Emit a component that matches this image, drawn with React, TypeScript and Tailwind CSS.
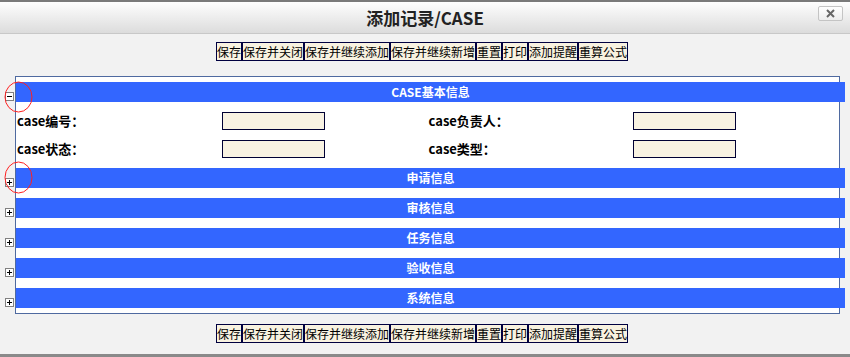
import React from "react";

const font = { fontFamily: '"Noto Sans CJK SC", "Noto Sans", sans-serif' };

const buttons = ["保存", "保存并关闭", "保存并继续添加", "保存并继续新增", "重置", "打印", "添加提醒", "重算公式"];

const ButtonBar = () => (
	<div className="flex justify-center">
		<div className="mr-[6px] flex">
			{buttons.map((b) => (
				<button
					key={b}
					className="h-[19px] border border-[#000040] bg-[#f8f2e0] px-0 text-[12px] leading-[17px] text-black"
				>
					{b}
				</button>
			))}
		</div>
	</div>
);

const Toggle = ({ open }: { open?: boolean }) => (
	<span className="absolute left-[-11px] top-[10px] flex h-[9px] w-[9px] items-center justify-center border border-[#808080] bg-white">
		<svg width="7" height="7" viewBox="0 0 7 7">
			<rect x="1" y="3" width="5" height="1" fill="#000" />
			{!open && <rect x="3" y="1" width="1" height="5" fill="#000" />}
		</svg>
	</span>
);

const Bar = ({ title, open }: { title: string; open?: boolean }) => (
	<div className="relative h-[20px] w-[calc(100%+6px)] bg-[#3366ff]">
		<Toggle open={open} />
		<div className="flex h-full items-center justify-center text-[12px] font-bold text-white">{title}</div>
	</div>
);

const Field = ({ label }: { label: string }) => (
	<>
		<div className="flex items-center pl-[1px] text-[13px] font-bold text-black">{label}</div>
		<div className="flex items-center">
			<input className="h-[18px] w-[103px] border border-[#000033] bg-[#f8f2e2] outline-none" />
		</div>
	</>
);

export default function App() {
	return (
		<div className="relative h-[357px] w-[850px] overflow-hidden border-b-[3px] border-[#8a8a8a] bg-[#f2f2f2]" style={font}>
			{/* title */}
			<div className="relative flex h-[34px] items-center justify-center border-t-2 border-b border-t-[#7a7a7a] border-b-[#c8c8c8] bg-gradient-to-b from-[#fefefe] to-[#dcdcdc]">
				<span className="text-[17px] font-bold text-[#222]">添加记录/CASE</span>
				<button className="absolute right-[7px] top-[4px] flex h-[15px] w-[25px] items-center justify-center rounded-[2px] border border-[#c4c4c4] bg-gradient-to-b from-white to-[#ececec]">
					<svg width="9" height="9" viewBox="0 0 9 9">
						<path d="M1 1L8 8M8 1L1 8" stroke="#666" strokeWidth="2" />
					</svg>
				</button>
			</div>

			<div className="pt-[8px]">
				<ButtonBar />

				<div className="ml-[15px] mr-[10px] mt-[15px] border border-[#4f6aa0] bg-white py-[5px]">
					<Bar title="CASE基本信息" open />
					<div className="grid h-[66px] grid-cols-4 grid-rows-2 gap-y-[10px] py-[10px]">
						<Field label="case编号：" />
						<Field label="case负责人：" />
						<Field label="case状态：" />
						<Field label="case类型：" />
					</div>
					<div className="flex flex-col gap-[10px]">
						<Bar title="申请信息" />
						<Bar title="审核信息" />
						<Bar title="任务信息" />
						<Bar title="验收信息" />
						<Bar title="系统信息" />
					</div>
				</div>

				<div className="mt-[10px]">
					<ButtonBar />
				</div>
			</div>

			{/* annotation circles */}
			<svg className="pointer-events-none absolute left-0 top-0" width="850" height="357">
				<ellipse cx="18.5" cy="97" rx="13.5" ry="15" fill="none" stroke="#ff2020" strokeWidth="1" />
				<ellipse cx="18.5" cy="177.5" rx="13.5" ry="15.5" fill="none" stroke="#ff2020" strokeWidth="1" />
			</svg>
		</div>
	);
}
